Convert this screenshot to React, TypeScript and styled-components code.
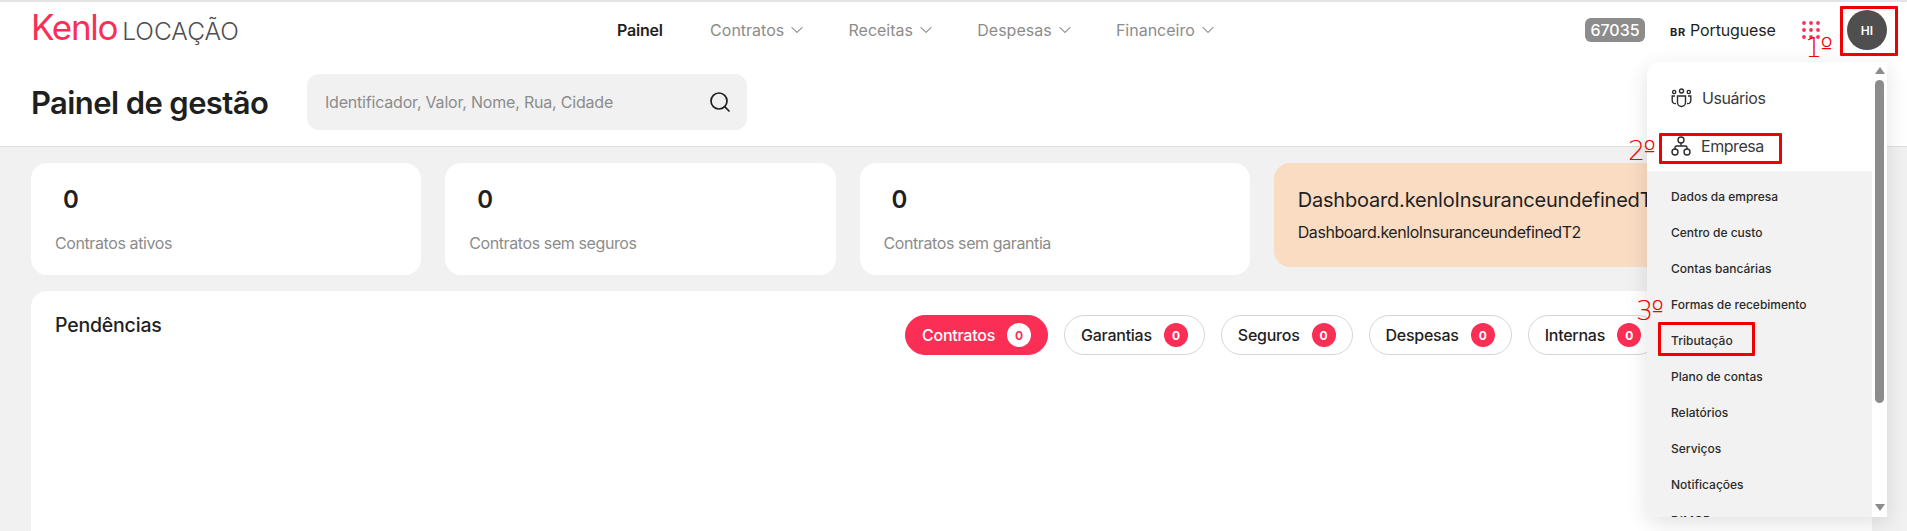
import React from "react";
import styled, { createGlobalStyle } from "styled-components";
import { ChevronDown, Search } from "lucide-react";

const Global = createGlobalStyle`
  html, body { margin: 0; padding: 0; height: 531px; overflow: hidden; background: #f1f1f1; }
  * { box-sizing: border-box; }
  body { font-family: Inter, "Noto Sans", sans-serif; color: #1f1f1f; }
`;

const Page = styled.div`
  position: relative;
  width: 1907px;
  height: 531px;
  overflow: hidden;
  display: flex;
  flex-direction: column;
`;
const Header = styled.header`
  height: 147px;
  flex: none;
  background: #fff;
  border-top: 2px solid #e4e4e4;
  border-bottom: 1px solid #dedede;
  padding: 0 20px 0 31px;
  display: flex;
  flex-direction: column;
`;
const TopBar = styled.div`
  height: 56px;
  display: flex;
  align-items: center;
`;
const Logo = styled.div`
  width: 586px;
  display: flex;
  align-items: baseline;
  gap: 5px;
  margin-top: -6px;
`;
const LogoMark = styled.span`
  font-size: 35px;
  font-weight: 400;
  letter-spacing: -1.3px;
  color: #fb2f55;
  line-height: 40px;
`;
const LogoSuffix = styled.span`
  font-size: 24.5px;
  font-weight: 300;
  color: #4f4f4f;
`;
const Nav = styled.nav`
  display: flex;
  align-items: center;
  gap: 41.3px;
`;
const NavItem = styled.div<{ $active?: boolean }>`
  display: flex;
  align-items: center;
  gap: 3px;
  margin-right: ${(p) => (p.$active ? "6px" : "0")};
  font-size: 16px;
  font-weight: ${(p) => (p.$active ? 600 : 400)};
  letter-spacing: ${(p) => (p.$active ? "-0.2px" : "0")};
  color: ${(p) => (p.$active ? "#1f1f1f" : "#8c8c8c")};
`;
const Tools = styled.div`
  margin-left: auto;
  display: flex;
  align-items: center;
`;
const Badge = styled.div`
  width: 60px;
  height: 24px;
  border-radius: 6px;
  background: #8c8c8c;
  color: #fff;
  font-size: 16px;
  font-weight: 500;
  display: flex;
  align-items: center;
  justify-content: center;
  margin-right: 25px;
`;
const Lang = styled.div`
  display: flex;
  align-items: baseline;
  gap: 4px;
  font-size: 16px;
  letter-spacing: -0.15px;
  width: 132px;
`;
const Flag = styled.span`
  font-size: 11px;
  font-weight: 700;
  letter-spacing: 0.8px;
`;
const Avatar = styled.div`
  width: 40px;
  height: 40px;
  border-radius: 50%;
  background: #4f4f4f;
  color: #fff;
  font-size: 12px;
  font-weight: 600;
  display: flex;
  align-items: center;
  justify-content: center;
  margin-left: 27px;
`;
const TitleRow = styled.div`
  flex: 1;
  display: flex;
  align-items: center;
`;
const Title = styled.h1`
  margin: 0;
  width: 276px;
  flex: none;
  font-size: 31px;
  font-weight: 600;
  letter-spacing: -0.6px;
  color: #1f1f1f;
`;
const SearchBox = styled.div`
  width: 440px;
  height: 56px;
  border-radius: 12px;
  background: #f1f1f1;
  padding: 0 15px 0 18px;
  display: flex;
  align-items: center;
  justify-content: space-between;
  color: #1f1f1f;
`;
const Placeholder = styled.span`
  font-size: 16px;
  letter-spacing: -0.2px;
  color: #8c8c8c;
`;
const Main = styled.main`
  flex: 1;
  padding: 16px 35px 0 31px;
  display: flex;
  flex-direction: column;
  gap: 16px;
`;
const Cards = styled.div`
  display: flex;
  gap: 24px;
  align-items: flex-start;
`;
const Card = styled.div`
  width: 390.25px;
  height: 112px;
  flex: none;
  background: #fff;
  border-radius: 16px;
  padding: 20px 24px;
`;
const Count = styled.div`
  font-size: 24px;
  font-weight: 600;
  line-height: 34px;
  padding-left: 8px;
`;
const CardLabel = styled.div`
  margin-top: 14px;
  font-size: 16px;
  line-height: 24px;
  letter-spacing: -0.4px;
  color: #8c8c8c;
`;
const Notice = styled.div`
  flex: 1;
  height: 104px;
  min-width: 0;
  background: #fadcc3;
  border-radius: 16px;
  padding: 22px 24px;
  overflow: hidden;
  white-space: nowrap;
`;
const NoticeTitle = styled.div`
  font-size: 20px;
  font-weight: 400;
  letter-spacing: -0.2px;
  line-height: 30px;
`;
const NoticeText = styled.div`
  margin-top: 5px;
  font-size: 16px;
  letter-spacing: -0.45px;
  line-height: 24px;
`;
const Panel = styled.section`
  flex: 1;
  background: #fff;
  border-radius: 16px 16px 0 0;
  padding: 24px;
  display: flex;
  align-items: flex-start;
`;
const PanelTitle = styled.h2`
  margin: 0;
  width: 850px;
  flex: none;
  font-size: 19.5px;
  font-weight: 500;
  line-height: 21px;
  letter-spacing: -0.2px;
`;
const Tabs = styled.div`
  display: flex;
  gap: 16px;
`;
const Tab = styled.div<{ $active?: boolean }>`
  height: 40px;
  padding: 0 16px;
  display: flex;
  align-items: center;
  gap: 12px;
  border-radius: 20px;
  font-size: 16px;
  font-weight: 500;
  letter-spacing: -0.25px;
  background: ${(p) => (p.$active ? "#fb2f55" : "#fff")};
  color: ${(p) => (p.$active ? "#fff" : "#1f1f1f")};
  border: 1px solid ${(p) => (p.$active ? "#fb2f55" : "#d6d6d6")};
`;
const TabCount = styled.span<{ $active?: boolean }>`
  width: 24px;
  height: 24px;
  border-radius: 50%;
  font-size: 12px;
  font-weight: 700;
  display: flex;
  align-items: center;
  justify-content: center;
  background: ${(p) => (p.$active ? "#fff" : "#fb2f55")};
  color: ${(p) => (p.$active ? "#fb2f55" : "#fff")};
`;
const Menu = styled.div`
  position: absolute;
  left: 1647px;
  top: 62px;
  width: 240px;
  height: 455px;
  display: flex;
  background: #fff;
  border-radius: 12px 0 0 12px;
  box-shadow: 0 6px 22px rgba(0, 0, 0, 0.12);
  overflow: hidden;
`;
const MenuList = styled.div`
  width: 225px;
  flex: none;
  overflow: hidden;
`;
const MenuTop = styled.div`
  display: flex;
  align-items: center;
  height: 48px;
  padding-left: 24px;
  gap: 10px;
  font-size: 16px;
  letter-spacing: -0.45px;
  color: #3a3a3a;
`;
const MenuTopWrap = styled.div`
  padding-top: 12px;
  height: 109px;
`;
const SubList = styled.div`
  background: #f2f2f2;
  padding-top: 7px;
  height: 346px;
  overflow: hidden;
`;
const SubItem = styled.div`
  height: 36px;
  padding-left: 24px;
  display: flex;
  align-items: center;
  font-size: 12px;
  font-weight: 500;
  color: #2b2b2b;
`;
const Scroll = styled.div`
  flex: 1;
  display: flex;
  flex-direction: column;
  align-items: center;
  padding: 5px 0 3px;
`;
const ArrowUp = styled.div`
  width: 0;
  height: 0;
  border-left: 5px solid transparent;
  border-right: 5px solid transparent;
  border-bottom: 7px solid #8c8c8c;
`;
const ArrowDown = styled.div`
  width: 0;
  height: 0;
  margin-top: auto;
  margin-bottom: 3px;
  border-left: 5px solid transparent;
  border-right: 5px solid transparent;
  border-top: 7px solid #8c8c8c;
`;
const Thumb = styled.div`
  margin-top: 6px;
  width: 9px;
  height: 323px;
  background: #8c8c8c;
  border-radius: 5px;
`;
const MarkBox = styled.div<{ $x: number; $y: number; $w: number; $h: number }>`
  position: absolute;
  left: ${(p) => p.$x}px;
  top: ${(p) => p.$y}px;
  width: ${(p) => p.$w}px;
  height: ${(p) => p.$h}px;
  border: 3px solid #f00000;
  border-radius: 1px;
`;
const MarkText = styled.div<{ $x: number; $y: number }>`
  position: absolute;
  left: ${(p) => p.$x}px;
  top: ${(p) => p.$y}px;
  font-family: "DejaVu Sans", sans-serif;
  font-size: 27px;
  font-weight: 200;
  letter-spacing: -2px;
  line-height: 30px;
  color: #f00000;
`;

const Dots = () => (
  <svg width="18" height="18" viewBox="0 0 18 18" fill="#fb2f55">
    {[2, 9, 16].flatMap((y) => [2, 9, 16].map((x) => <circle key={`${x}-${y}`} cx={x} cy={y} r="1.9" />))}
  </svg>
);
const UsersIcon = () => (
  <svg width="21" height="21" viewBox="0 0 21 21" fill="none" stroke="#2b2b2b" strokeWidth="1.4">
    <circle cx="10.5" cy="3" r="2" />
    <circle cx="3.2" cy="4" r="1.6" />
    <circle cx="17.8" cy="4" r="1.6" />
    <path d="M6.5 8h8v6.5a4 4 0 0 1-8 0z" />
    <path d="M4 8H1.2v4.5A3 3 0 0 0 5 15.5" />
    <path d="M17 8h2.8v4.5A3 3 0 0 1 16 15.5" />
  </svg>
);
const OrgIcon = () => (
  <svg width="20" height="20" viewBox="0 0 20 20" fill="none" stroke="#2b2b2b" strokeWidth="1.4">
    <circle cx="10" cy="4" r="3" />
    <circle cx="4" cy="16" r="3" />
    <circle cx="16" cy="16" r="3" />
    <path d="M10 7v3M4 13v-1.5a1.5 1.5 0 0 1 1.5-1.5h9a1.5 1.5 0 0 1 1.5 1.5V13" />
  </svg>
);

const navItems = ["Contratos", "Receitas", "Despesas", "Financeiro"];
const cards = ["Contratos ativos", "Contratos sem seguros", "Contratos sem garantia"];
const tabs = ["Contratos", "Garantias", "Seguros", "Despesas", "Internas"];
const subItems = [
  "Dados da empresa",
  "Centro de custo",
  "Contas bancárias",
  "Formas de recebimento",
  "Tributação",
  "Plano de contas",
  "Relatórios",
  "Serviços",
  "Notificações",
  "DIMOB",
];

export default function App() {
  return (
    <Page>
      <Global />
      <Header>
        <TopBar>
          <Logo>
            <LogoMark>Kenlo</LogoMark>
            <LogoSuffix>LOCAÇÃO</LogoSuffix>
          </Logo>
          <Nav>
            <NavItem $active>Painel</NavItem>
            {navItems.map((n) => (
              <NavItem key={n}>
                {n}
                <ChevronDown size={20} strokeWidth={1} color="#333" />
              </NavItem>
            ))}
          </Nav>
          <Tools>
            <Badge>67035</Badge>
            <Lang>
              <Flag>BR</Flag>
              Portuguese
            </Lang>
            <Dots />
            <Avatar>HI</Avatar>
          </Tools>
        </TopBar>
        <TitleRow>
          <Title>Painel de gestão</Title>
          <SearchBox>
            <Placeholder>Identificador, Valor, Nome, Rua, Cidade</Placeholder>
            <Search size={24} strokeWidth={1.7} />
          </SearchBox>
        </TitleRow>
      </Header>
      <Main>
        <Cards>
          {cards.map((c) => (
            <Card key={c}>
              <Count>0</Count>
              <CardLabel>{c}</CardLabel>
            </Card>
          ))}
          <Notice>
            <NoticeTitle>Dashboard.kenloInsuranceundefinedT1</NoticeTitle>
            <NoticeText>Dashboard.kenloInsuranceundefinedT2</NoticeText>
          </Notice>
        </Cards>
        <Panel>
          <PanelTitle>Pendências</PanelTitle>
          <Tabs>
            {tabs.map((t, i) => (
              <Tab key={t} $active={i === 0}>
                {t}
                <TabCount $active={i === 0}>0</TabCount>
              </Tab>
            ))}
          </Tabs>
        </Panel>
      </Main>
      <Menu>
        <MenuList>
          <MenuTopWrap>
            <MenuTop>
              <UsersIcon />
              Usuários
            </MenuTop>
            <MenuTop>
              <OrgIcon />
              Empresa
            </MenuTop>
          </MenuTopWrap>
          <SubList>
            {subItems.map((s) => (
              <SubItem key={s}>{s}</SubItem>
            ))}
          </SubList>
        </MenuList>
        <Scroll>
          <ArrowUp />
          <Thumb />
          <ArrowDown />
        </Scroll>
      </Menu>
      <MarkBox $x={1840} $y={6} $w={58} $h={50} />
      <MarkBox $x={1659} $y={133} $w={123} $h={31} />
      <MarkBox $x={1658} $y={322} $w={97} $h={34} />
      <MarkText $x={1805} $y={33}>1º</MarkText>
      <MarkText $x={1628} $y={136}>2º</MarkText>
      <MarkText $x={1636} $y={296}>3º</MarkText>
    </Page>
  );
}
